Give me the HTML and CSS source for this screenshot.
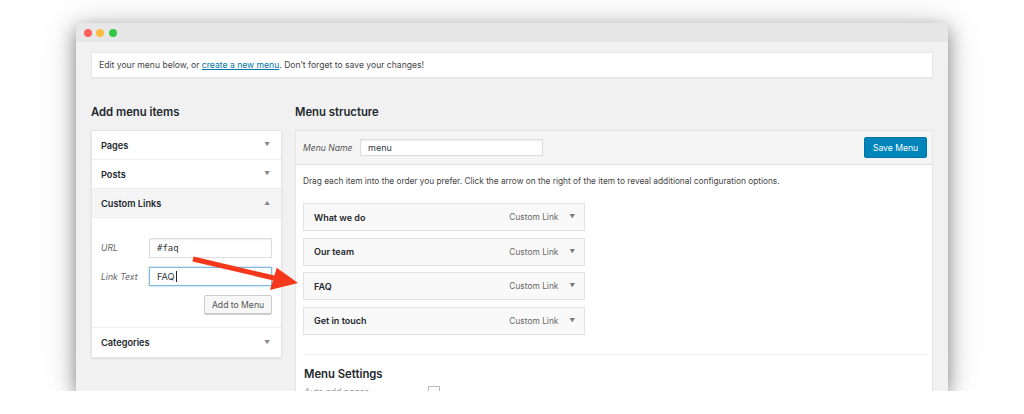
FILE: index.html
```html
<!DOCTYPE html>
<html>
<head>
<meta charset="utf-8">
<link rel="stylesheet" href="styles.css">
</head>
<body>
<div class="window">
  <div class="titlebar">
    <span class="dot red"></span><span class="dot yellow"></span><span class="dot green"></span>
  </div>
  <div class="content">
    <div class="notice"><span>Edit your menu below, or <a href="#">create a new menu</a>. Don’t forget to save your changes!</span></div>
    <div class="columns">
      <div class="left">
        <h2>Add menu items</h2>
        <div class="accordion">
          <div class="acc-row"><span>Pages</span><span class="caret">▼</span></div>
          <div class="acc-row"><span>Posts</span><span class="caret">▼</span></div>
          <div class="acc-row open"><span>Custom Links</span><span class="caret">▲</span></div>
          <div class="acc-form">
            <div class="field"><label>URL</label><div class="input mono">#faq</div></div>
            <div class="field"><label>Link Text</label><div class="input focus">FAQ<span class="cursor"></span></div></div>
            <div class="btn-row"><span class="btn">Add to Menu</span></div>
          </div>
          <div class="acc-row last"><span>Categories</span><span class="caret">▼</span></div>
        </div>
      </div>
      <div class="right">
        <h2>Menu structure</h2>
        <div class="mbox">
          <div class="mhead">
            <label>Menu Name</label>
            <div class="input name">menu</div>
            <span class="save">Save Menu</span>
          </div>
          <div class="mbody">
            <p class="hint">Drag each item into the order you prefer. Click the arrow on the right of the item to reveal additional configuration options.</p>
            <div class="items">
              <div class="item"><span class="t">What we do</span><span class="type">Custom Link</span><span class="caret">▼</span></div>
              <div class="item"><span class="t">Our team</span><span class="type">Custom Link</span><span class="caret">▼</span></div>
              <div class="item"><span class="t">FAQ</span><span class="type">Custom Link</span><span class="caret">▼</span></div>
              <div class="item"><span class="t">Get in touch</span><span class="type">Custom Link</span><span class="caret">▼</span></div>
            </div>
            <div class="sep"></div>
            <h3>Menu Settings</h3>
            <div class="setting"><span class="slabel">Auto add pages</span><span class="check"></span></div>
          </div>
        </div>
      </div>
    </div>
  </div>
  <svg class="arrow" width="872" height="368" viewBox="0 0 872 368">
    <line x1="117" y1="236" x2="198" y2="255" stroke="#f5381b" stroke-width="5"/>
    <polygon points="200.7,244.7 222,260 194,267" fill="#f5381b"/>
  </svg>
</div>
</body>
</html>
```
FILE: styles.css
```css
html, body { margin: 0; padding: 0; background: #fff; }
body { font-family: Inter, Roboto, "Liberation Sans", sans-serif; color: #23282d; }

.window {
  position: relative;
  margin: 23px 0 0 76px;
  width: 872px;
  height: 368px;
  background: #f1f1f1;
  overflow: hidden;
  box-shadow: 0 6px 18px rgba(0,0,0,0.45), 0 0 40px rgba(0,0,0,0.12);
}
.titlebar {
  height: 19px;
  background: #e7e7e7;
  display: flex;
  align-items: center;
  gap: 4.4px;
  padding-left: 8px;
  padding-top: 1px;
  box-sizing: border-box;
}
.dot { width: 8px; height: 8px; border-radius: 50%; display: block; }
.red { background: #fc605c; }
.yellow { background: #fdbc40; }
.green { background: #34c84a; }

.content { padding: 10px 15px 0 15px; }
.notice {
  height: 26px;
  box-sizing: border-box;
  background: #fff;
  border: 1px solid #e8e8e8;
  box-shadow: 0 1px 1px rgba(0,0,0,0.04);
  font-size: 8.6px;
  color: #444;
  padding-left: 7px;
  display: flex;
  align-items: center;
}
.notice a { color: #0073aa; text-decoration: underline; }

.columns { display: flex; gap: 13px; margin-top: 25px; }
.left { width: 191px; }
.right { width: 638px; }
h2 {
  margin: 0;
  height: 27px;
  font-size: 11.3px;
  font-weight: 600;
  color: #23282d;
  line-height: 14px;
  padding-top: 2px;
  box-sizing: border-box;
}

.accordion { background: #fff; box-shadow: 0 1px 2px rgba(0,0,0,0.08); border: 1px solid #e5e5e5; }
.acc-row {
  height: 29px;
  box-sizing: border-box;
  border-bottom: 1px solid #eee;
  display: flex;
  align-items: center;
  justify-content: space-between;
  padding: 0 11px 0 9px;
  font-size: 9.2px;
  font-weight: 600;
  color: #23282d;
}
.acc-row.open { background: #f5f5f5; }
.acc-row.last { border-bottom: none; }
.caret { font-size: 5.5px; color: #888; }

.acc-form { padding: 20px 9px 12px 9px; height: 110px; box-sizing: border-box; border-bottom: 1px solid #eee; }
.field { display: flex; align-items: center; margin-bottom: 9px; }
.field label { width: 48px; font-size: 8.6px; font-style: italic; color: #666; }
.input {
  flex: 1;
  height: 20px;
  box-sizing: border-box;
  border: 1px solid #ddd;
  box-shadow: inset 0 1px 2px rgba(0,0,0,0.07);
  background: #fff;
  font-size: 9.2px;
  color: #32373c;
  padding-left: 7px;
  display: flex;
  align-items: center;
}
.input.mono { font-family: "DejaVu Sans Mono", "Liberation Mono", monospace; font-size: 9px; }
.input.focus { border-color: #80b8e0; height: 19px; box-shadow: 0 0 2px rgba(30,140,190,0.5); }
.cursor { width: 1px; height: 11px; background: #222; margin-left: 1px; }
.btn-row { display: flex; justify-content: flex-end; }
.btn {
  width: 68px;
  height: 19px;
  box-sizing: border-box;
  border: 1px solid #ccc;
  border-radius: 2px;
  background: #f7f7f7;
  box-shadow: 0 1px 0 #ccc;
  font-size: 8.6px;
  color: #555;
  display: flex;
  align-items: center;
  justify-content: center;
}

.mbox { background: #fff; border: 1px solid #e5e5e5; height: 270px; box-sizing: border-box; }
.mhead {
  height: 34px;
  box-sizing: border-box;
  background: #f5f5f5;
  border-bottom: 1px solid #dfdfdf;
  display: flex;
  align-items: center;
  padding: 0 5px 0 7px;
}
.mhead label { width: 57px; font-size: 8.6px; font-style: italic; color: #555; }
.input.name { flex: none; width: 183px; height: 17px; font-size: 9px; }
.save {
  margin-left: auto;
  width: 63px;
  height: 21px;
  box-sizing: border-box;
  background: #0085ba;
  border: 1px solid #0073aa;
  border-radius: 2px;
  color: #fff;
  font-size: 8.6px;
  display: flex;
  align-items: center;
  justify-content: center;
}
.mbody { padding: 0 6px 0 7px; }
.hint { margin: 0; height: 38px; padding-top: 11px; box-sizing: border-box; font-size: 8.3px; color: #444; }
.items { display: flex; flex-direction: column; gap: 6.5px; }
.item {
  width: 282px;
  height: 28px;
  box-sizing: border-box;
  border: 1px solid #e2e2e2;
  background: #f9f9f9;
  display: flex;
  align-items: center;
  padding: 0 9px 0 10px;
  font-size: 9px;
}
.item .t { font-weight: 600; color: #23282d; flex: 1; }
.item .type { color: #666; font-size: 8.4px; margin-right: 11px; }
.item .caret { font-size: 5.5px; color: #777; }
.sep { height: 1px; background: #eee; margin: 19px 0 0 1px; }
h3 { margin: 12px 0 0 1px; font-size: 11.3px; font-weight: 600; color: #23282d; height: 18px; }
.setting { display: flex; align-items: center; padding-left: 1px; margin-top: 1px; }
.slabel { width: 124px; font-size: 8.6px; font-style: italic; color: #999; }
.check { width: 10px; height: 10px; border: 1px solid #bbb; background: #fff; }

.arrow { position: absolute; left: 0; top: 0; pointer-events: none; }
```
